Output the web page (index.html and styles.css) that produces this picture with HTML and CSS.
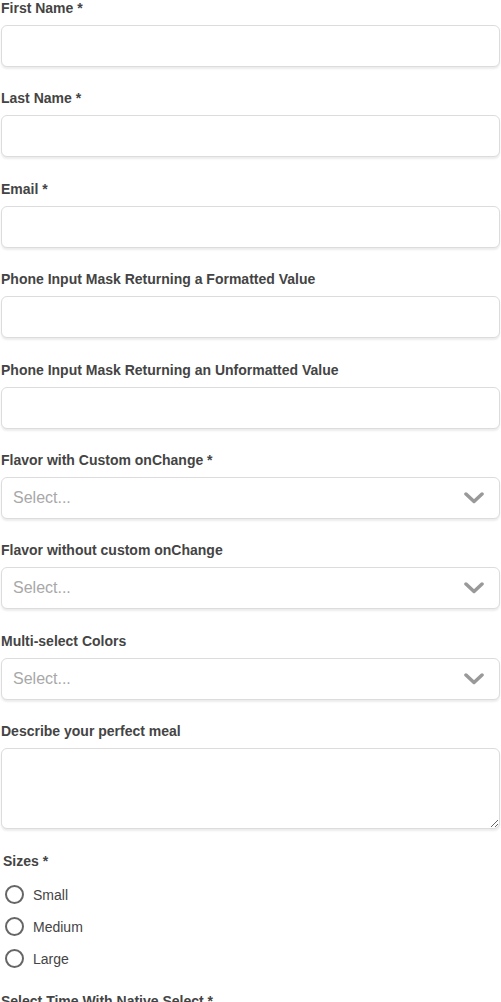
FILE: index.html
```html
<!DOCTYPE html>
<html>
<head>
<meta charset="utf-8">
<link rel="stylesheet" href="styles.css">
</head>
<body>
<form class="form">
  <div class="field">
    <label class="label">First Name *</label>
    <input class="input" type="text">
  </div>
  <div class="field">
    <label class="label">Last Name *</label>
    <input class="input" type="text">
  </div>
  <div class="field">
    <label class="label">Email *</label>
    <input class="input" type="text">
  </div>
  <div class="field">
    <label class="label">Phone Input Mask Returning a Formatted Value</label>
    <input class="input" type="text">
  </div>
  <div class="field">
    <label class="label">Phone Input Mask Returning an Unformatted Value</label>
    <input class="input" type="text">
  </div>
  <div class="field">
    <label class="label">Flavor with Custom onChange *</label>
    <div class="select"><span class="placeholder">Select...</span>
      <svg class="chev" width="22" height="12" viewBox="0 0 22 12"><path d="M3 2 L11 9.5 L19 2" fill="none" stroke="#999" stroke-width="3.5" stroke-linecap="round" stroke-linejoin="round"/></svg>
    </div>
  </div>
  <div class="field">
    <label class="label">Flavor without custom onChange</label>
    <div class="select"><span class="placeholder">Select...</span>
      <svg class="chev" width="22" height="12" viewBox="0 0 22 12"><path d="M3 2 L11 9.5 L19 2" fill="none" stroke="#999" stroke-width="3.5" stroke-linecap="round" stroke-linejoin="round"/></svg>
    </div>
  </div>
  <div class="field">
    <label class="label">Multi-select Colors</label>
    <div class="select"><span class="placeholder">Select...</span>
      <svg class="chev" width="22" height="12" viewBox="0 0 22 12"><path d="M3 2 L11 9.5 L19 2" fill="none" stroke="#999" stroke-width="3.5" stroke-linecap="round" stroke-linejoin="round"/></svg>
    </div>
  </div>
  <div class="field">
    <label class="label">Describe your perfect meal</label>
    <textarea class="textarea"></textarea>
  </div>
  <fieldset class="radios">
    <legend class="label legend">Sizes *</legend>
    <label class="radio"><span class="circle"></span>Small</label>
    <label class="radio"><span class="circle"></span>Medium</label>
    <label class="radio"><span class="circle"></span>Large</label>
  </fieldset>
  <div class="field">
    <label class="label">Select Time With Native Select *</label>
  </div>
</form>
</body>
</html>
```
FILE: styles.css
```css
html, body {
  margin: 0;
  padding: 0;
  background: #fff;
}
body {
  font-family: "Liberation Sans", Arial, sans-serif;
  color: #444;
}
.form {
  display: flex;
  flex-direction: column;
  padding-left: 1px;
}
.field {
  display: flex;
  flex-direction: column;
  margin-bottom: 23.4px;
}
.label {
  display: block;
  font-size: 14px;
  font-weight: bold;
  line-height: 17px;
  color: #444;
  margin-bottom: 8px;
}
.input, .select, .textarea {
  box-sizing: border-box;
  width: 499px;
  height: 42px;
  border: 1px solid #dcdcdc;
  border-radius: 6px;
  box-shadow: 0 2px 2px rgba(0,0,0,0.08);
  background: #fff;
  margin: 0;
  font-family: inherit;
  font-size: 16px;
}
.select {
  display: flex;
  align-items: center;
  justify-content: space-between;
  padding: 0 14px 0 11px;
}
.placeholder {
  color: #a8a8a8;
  font-size: 16px;
}
.chev {
  display: block;
}
.textarea {
  height: 81px;
  resize: vertical;
  display: block;
}
.radios {
  border: 0;
  margin: 0;
  padding: 0 0 0 2px;
  display: flex;
  flex-direction: column;
}
.legend {
  padding: 0;
  margin-bottom: 9px;
  margin-top: -1px;
}
.radio {
  display: flex;
  align-items: center;
  height: 32px;
  font-size: 14px;
  color: #444;
  padding-left: 2px;
}
.circle {
  box-sizing: border-box;
  width: 19px;
  height: 19px;
  border: 2px solid #666;
  border-radius: 50%;
  margin-right: 9px;
}
.radios + .field {
  margin-top: 18px;
}
```
